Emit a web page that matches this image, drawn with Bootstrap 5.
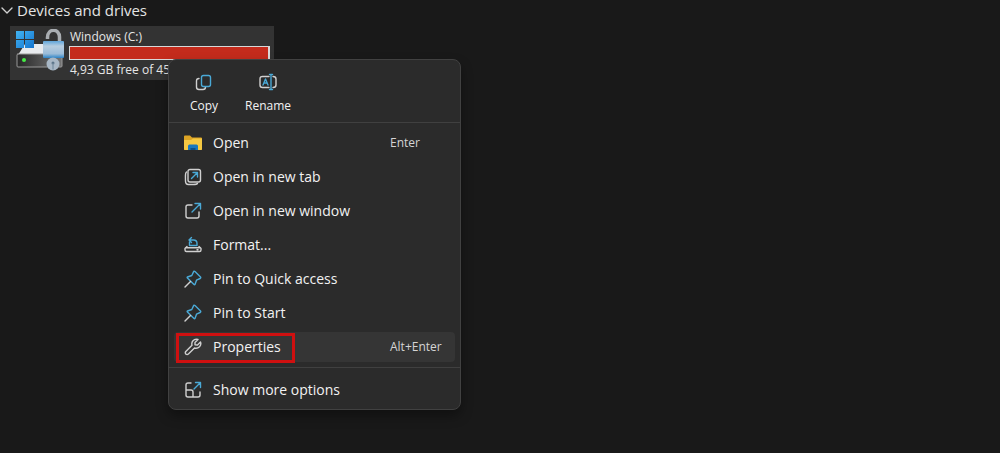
<!DOCTYPE html>
<html lang="en">
<head>
<meta charset="utf-8">
<meta name="viewport" content="width=device-width, initial-scale=1">
<title>Devices and drives</title>
<link href="https://cdn.jsdelivr.net/npm/bootstrap@5.3.0/dist/css/bootstrap.min.css" rel="stylesheet">
<style>
body{background:#191919;color:#f2f2f2;font-family:"Open Sans","Noto Sans",sans-serif;font-size:14px;line-height:20px;min-height:100vh}
.group-title{color:#e4e4e4;font-size:15px;gap:4px}
.drive{width:264px;height:54px;margin:6px 0 0 10px;padding:3px 5px 0;background:#333;color:#e6e6e6;font-size:12px;line-height:16px}
.drive-icon{flex:none;width:50px;height:46px;margin-right:4px}
.usage{width:201px;height:14px;border:1px solid #d8d8d8;border-right-width:2px;border-radius:0;background:#333;margin:1px 0 2px}
.usage .progress-bar{background:#c42b1c}
.drive-name,.drive-free{padding-left:1px}
.context-menu{position:absolute;left:168px;top:59px;width:293px;background:#2b2b2b;border:1px solid #414141;border-radius:8px;box-shadow:0 6px 12px rgba(0,0,0,.35)}
.quick{height:63px;padding:12px 3px 0;border-bottom:1px solid #404040}
.quick .btn{width:64px;font-size:12px;line-height:20px;gap:4px;color:#f2f2f2}
.entries{display:flex;flex-direction:column;gap:4px;padding:5px}
.entries.more{border-top:1px solid #404040;padding-top:7px;padding-bottom:4px}
.entry{position:relative;height:30px;color:#f2f2f2;font-size:14px;line-height:20px;padding:0 11px 0 10px;border-radius:4px;text-align:left}
.entry svg{flex:none;margin-right:11px}
.entry.active{background:#353535;color:#f2f2f2}
.entry.active::after{content:"";position:absolute;left:2px;top:1px;width:119px;height:30px;border:3px solid #cf1010}
.shortcut{width:54px;font-size:12px;color:#d4d4d4;white-space:nowrap}
svg{fill:none;stroke:#d0d0d0;stroke-width:1.4;stroke-linecap:round;stroke-linejoin:round}
.b{stroke:#4aa9d6}
</style>
</head>
<body>
<main>
<h1 class="group-title d-flex align-items-center fw-normal m-0">
<svg width="13" height="20" viewBox="0 0 13 20"><path d="M2 8l5 5 5-5"/></svg>Devices and drives</h1>
<section class="drive d-flex">
<svg class="drive-icon" viewBox="0 0 50 46" stroke="none">
<defs>
<linearGradient id="win" x2="1" y2="1"><stop stop-color="#42b4f2"/><stop offset="1" stop-color="#1575cf"/></linearGradient>
<linearGradient id="lock" x2="0" y2="1"><stop stop-color="#5fa5da"/><stop offset=".3" stop-color="#b7cddf"/><stop offset=".75" stop-color="#9bbcd8"/><stop offset="1" stop-color="#2d84c6"/></linearGradient>
<linearGradient id="hdd" x2="1"><stop stop-color="#272727"/><stop offset="1" stop-color="#747474"/></linearGradient>
</defs>
<path d="M10 15h31l5 11H3z" fill="#e9ebee" stroke="none"/>
<rect x="2" y="25" width="45" height="13" rx="1" fill="url(#hdd)" stroke="#999" stroke-width="1"/>
<circle cx="9" cy="31" r="2" fill="#45ed45" stroke="none"/>
<path d="M1 2h8v8H1zM10 2h9v8h-9zM1 11h8v8H1zM10 11h9v8h-9z" fill="url(#win)" stroke="none"/>
<path d="M32.500 10V8.500c0-9.500 12-9.500 12-.5v5" stroke="#a9adb1" stroke-width="3.500" stroke-linecap="butt"/>
<rect x="28" y="12" width="21" height="17" rx="1" fill="url(#lock)" stroke="none"/>
<circle cx="38" cy="35" r="6.500" fill="#a8b7c5" stroke="none"/>
<circle cx="38" cy="34" r="1.500" fill="#5b7489" stroke="none"/><path d="M38 35v5" stroke="#7c92a4"/>
</svg>
<div>
<div class="drive-name">Windows (C:)</div>
<div class="progress usage" role="progressbar" aria-label="Used space" aria-valuenow="99" aria-valuemin="0" aria-valuemax="100"><div class="progress-bar" style="width:100%"></div></div>
<div class="drive-free">4,93 GB free of 454 GB</div>
</div>
</section>
</main>
<div class="context-menu" role="menu">
<div class="quick d-flex">
<button class="btn border-0 p-0 d-flex flex-column align-items-center" role="menuitem"><svg width="20" height="20" viewBox="0 0 20 20"><path d="M5 6.500C3.500 6.500 2.500 7.500 2.500 9v6c0 1.500 1 2.500 2.500 2.500h4c1.500 0 2.500-.8 2.500-2.500"/><rect class="b" x="7.500" y="3.500" width="9" height="11" rx="2"/></svg>Copy</button>
<button class="btn border-0 p-0 d-flex flex-column align-items-center" role="menuitem"><svg width="20" height="20" viewBox="0 0 20 20"><path d="M11 4.500H4.500Q2 4.500 2 7v6q0 2.500 2.500 2.500H11M15 4.500q3 0 3 2.500v6q0 2.500-3 2.500"/><path class="b" d="M5 13l2.500-6 2.500 6M6 11h3M11.500 2.500h3M13 2.500v15M11.500 17.500h3"/></svg>Rename</button>
</div>
<div class="entries">
<button class="btn border-0 entry d-flex align-items-center" role="menuitem"><svg width="18" height="18" viewBox="0 0 18 18"><path d="M0 2.500q0-1 1-1h5l2 2h9q1 0 1 1V15q0 1-1 1H1q-1 0-1-1z" fill="#dda425" stroke="none"/><path d="M0 6h7l2-1.500h9V15q0 1-1 1H1q-1 0-1-1z" fill="#f5c842" stroke="none"/><path d="M4 16v-4q0-1.500 1.500-1.500h7q1.500 0 1.500 1.500v4z" fill="#1877be" stroke="none"/><path d="M6.500 16v-2h5v2z" fill="#0c4f88" stroke="none"/></svg><span class="flex-grow-1">Open</span><span class="shortcut">Enter</span></button>
<button class="btn border-0 entry d-flex align-items-center" role="menuitem"><svg width="18" height="18" viewBox="0 0 18 18"><path d="M2.500 4C1 5 1.500 6 1.500 13q0 3.500 3 3.500c7 0 8 .5 9-1"/><rect x="4" y="1.500" width="12.500" height="12.500" rx="2"/><path class="b" d="M7.500 10.500l6-6M9 4.500h4.500V9"/></svg>Open in new tab</button>
<button class="btn border-0 entry d-flex align-items-center" role="menuitem"><svg width="18" height="18" viewBox="0 0 18 18"><path d="M8 3H4Q2 3 2 5v9q0 2 2 2h9q2 0 2-2v-4"/><path class="b" d="M8 10l8.500-8.500M11 1.500h5.500V7"/></svg>Open in new window</button>
<button class="btn border-0 entry d-flex align-items-center" role="menuitem"><svg width="18" height="18" viewBox="0 0 18 18"><path d="M3 10.500l-2 2V14q0 1.500 1.500 1.500h13Q17 15.500 17 14v-1.500l-2-2M1.500 11.800h15M13 13.700h1"/><path class="b" d="M5.500 9.500h7.500V7.500q0-3.500-3.500-3.500H5M7.500 1.500L5 4l2.500 2.500M5.500 6v3.500"/></svg>Format...</button>
<button class="btn border-0 entry d-flex align-items-center" role="menuitem"><svg width="18" height="18" viewBox="0 0 18 18"><path class="b" d="M11 1.500l5.500 5.500q.7 1-.4 1.500l-3.600 1.700-1.500 4.300q-.4.700-1 .1L3.400 8q-.6-.7.100-1l4.300-1.500L9.500 1.900q.5-1.100 1.500-.4z"/><path d="M6.500 11.500L1 17"/></svg>Pin to Quick access</button>
<button class="btn border-0 entry d-flex align-items-center" role="menuitem"><svg width="18" height="18" viewBox="0 0 18 18"><path class="b" d="M11 1.500l5.500 5.500q.7 1-.4 1.500l-3.600 1.700-1.500 4.300q-.4.700-1 .1L3.400 8q-.6-.7.100-1l4.300-1.500L9.500 1.900q.5-1.100 1.500-.4z"/><path d="M6.500 11.500L1 17"/></svg>Pin to Start</button>
<button class="btn border-0 entry active d-flex align-items-center" role="menuitem"><svg width="18" height="18" viewBox="0 0 18 18"><path d="M14 1.500q-3-1-5 1.200Q7.300 4.500 8 7.300L1.800 13.500q-1 1.300 0 2.500 1.300 1.200 2.600 0L10.500 10q3 .7 5-1.200 2-2 1-4.800L13.500 7 11 6.800V4.500z"/></svg><span class="flex-grow-1">Properties</span><span class="shortcut">Alt+Enter</span></button>
</div>
<div class="entries more">
<button class="btn border-0 entry d-flex align-items-center" role="menuitem"><svg width="18" height="18" viewBox="0 0 18 18"><path d="M7 2H4Q2 2 2 4v10q0 2 2 2h10q2 0 2-2v-3M2 9h5q2 0 2 2v5M2 6v4"/><path class="b" d="M10 8l6-6M11.500 1.500h5v5"/></svg>Show more options</button>
</div>
</div>
<script src="https://cdn.jsdelivr.net/npm/bootstrap@5.3.0/dist/js/bootstrap.bundle.min.js"></script>
</body>
</html>
